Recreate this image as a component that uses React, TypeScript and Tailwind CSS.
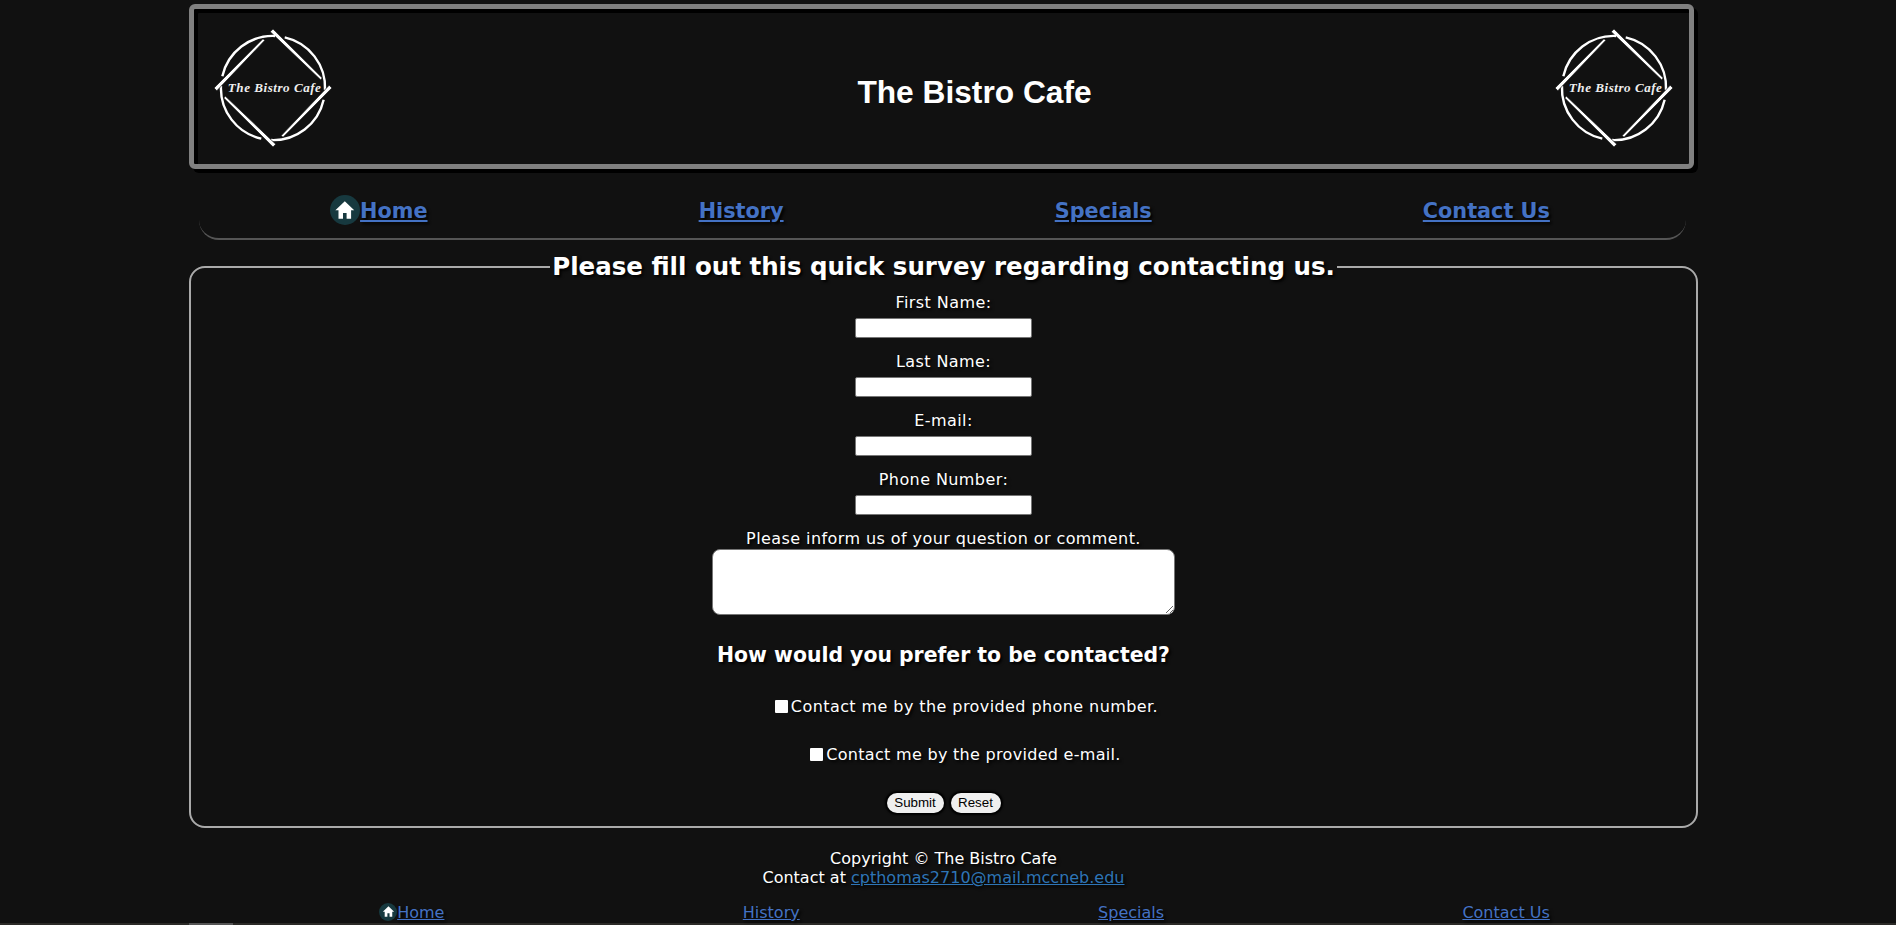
const navLinks = ['History', 'Specials', 'Contact Us'];
const fields = ['First Name:', 'Last Name:', 'E-mail:', 'Phone Number:'];

function HomeIcon({ className }: { className: string }) {
  return (
    <span className={`inline-flex items-center justify-center rounded-full bg-[#17393f] ${className}`}>
      <svg viewBox="0 0 24 24" className="h-[72%] w-[72%]" fill="#ffffff">
        <path d="M12 2.5 1.5 12.5H5V22h5v-6.5h4V22h5v-9.500h3.500z" />
      </svg>
    </span>
  );
}

function Logo() {
  return (
    <svg viewBox="0 0 354 354" className="h-[122px] w-[122px] shrink-0">
      {[0, 90, 180, 270].map((angle) => (
        <g key={angle} transform={`rotate(${angle} 177 177)`}>
          <path d="M211 30A150 150 0 0 1 328 183" fill="none" stroke="#ffffff" strokeWidth="7" />
          <polygon points="169,14 177,6 185,14 320,148 315,153" fill="#ffffff" stroke="#111111" strokeWidth="2" />
        </g>
      ))}
      <text
        x="181"
        y="188"
        textAnchor="middle"
        textLength="270"
        fill="#eeeeee"
        fontSize="38"
        fontStyle="italic"
        fontWeight="700"
        fontFamily="'Liberation Serif', serif"
      >
        The Bistro Cafe
      </text>
    </svg>
  );
}

export default function App() {
  return (
    <div className="h-[925px] overflow-hidden bg-[#111111] font-['DejaVu_Sans',sans-serif] text-white">
      <div className="h-[923px] pr-[9px]">
        <div className="mx-auto flex w-[1509px] flex-col pt-[4px]">
          {/* Header */}
          <header className="flex h-[165px] w-[1505px] shrink-0 items-center justify-between rounded-[6px] border-[5px] border-[#808080] pl-[18px] pr-[14px] pt-[3px] shadow-[4px_4px_0_#000,inset_4px_4px_0_#000]">
            <Logo />
            <h1 className="pl-[62px] pt-[9px] font-['Liberation_Sans',sans-serif] text-[31.7px] font-bold leading-none">
              The Bistro Cafe
            </h1>
            <Logo />
          </header>

          {/* Nav */}
          <nav className="ml-[10px] mt-[4px] h-[67px] w-[1487px] shrink-0 rounded-b-[20px] border-b-2 border-[#555555]">
            <ul className="-ml-[4.500px] flex h-full w-[1491px] items-center justify-around pt-[12px] text-[20.8px] font-bold [text-shadow:2px_2px_3px_#000]">
              <li className="flex items-center">
                <HomeIcon className="-mt-[4px] h-[30px] w-[30px]" />
                <a href="#" className="text-[#4472c4] underline">Home</a>
              </li>
              {navLinks.map((link) => (
                <li key={link}>
                  <a href="#" className="text-[#4472c4] underline">{link}</a>
                </li>
              ))}
            </ul>
          </nav>

          {/* Survey */}
          <form className="mt-[12px] shrink-0">
            <fieldset className="h-[576px] rounded-[16px] border-2 border-[#aaaaaa] text-center [text-shadow:2px_2px_3px_#000]">
              <legend className="mx-auto px-[2px] text-[24.5px] font-bold leading-[30px]">
                Please fill out this quick survey regarding contacting us.
              </legend>
              <div className="flex flex-col items-center pt-[11px] text-base leading-[19px] tracking-[0.42px]">
                {fields.map((field) => (
                  <label key={field} className="flex h-[59px] flex-col items-center">
                    {field}
                    <input
                      type="text"
                      className="mt-[6px] h-[20px] w-[177px] rounded-[2px] border border-[#767676] bg-white"
                    />
                  </label>
                ))}
                <label className="flex flex-col items-center">
                  Please inform us of your question or comment.
                  <textarea className="mt-[1px] h-[66px] w-[463px] rounded-[8px] border border-[#767676] bg-white" />
                </label>
                <h2 className="mt-[25px] text-[20.4px] font-bold leading-[30px] tracking-normal">
                  How would you prefer to be contacted?
                </h2>
                <label className="mt-[27px] flex items-center gap-[3px] pl-[46px]">
                  <input type="checkbox" className="h-[13px] w-[13px] appearance-none rounded-[1px] bg-white" />
                  Contact me by the provided phone number.
                </label>
                <label className="mt-[29px] flex items-center gap-[3px] pl-[44px] tracking-[0.3px]">
                  <input type="checkbox" className="h-[13px] w-[13px] appearance-none rounded-[1px] bg-white" />
                  Contact me by the provided e-mail.
                </label>
                <div className="mt-[29px] flex gap-[7px] font-['Liberation_Sans',sans-serif] text-[13.33px] leading-none tracking-normal text-black [text-shadow:none]">
                  <button type="button" className="h-[20px] w-[57px] rounded-[10px] bg-[#efefef] shadow-[0_0_2px_2px_#000]">Submit</button>
                  <button type="button" className="h-[20px] w-[50px] rounded-[10px] bg-[#efefef] shadow-[0_0_2px_2px_#000]">Reset</button>
                </div>
              </div>
            </fieldset>
          </form>

          {/* Footer */}
          <footer className="mt-[21px] shrink-0 text-base leading-[19px] [text-shadow:2px_2px_3px_#000]">
            <p className="text-center">Copyright © The Bistro Cafe</p>
            <p className="text-center">
              Contact at <a href="#" className="text-[#2e75b6] underline">cpthomas2710@mail.mccneb.edu</a>
            </p>
            <ul className="ml-[41px] mt-[16px] flex w-[1469px] items-center justify-around">
              <li className="flex items-center">
                <HomeIcon className="-mt-[2px] h-[18px] w-[18px]" />
                <a href="#" className="text-[#4472c4] underline">Home</a>
              </li>
              {navLinks.map((link) => (
                <li key={link}>
                  <a href="#" className="text-[#4472c4] underline">{link}</a>
                </li>
              ))}
            </ul>
          </footer>
        </div>
      </div>
      {/* Top edge of the next section, cut off by the window */}
      <div className="h-[2px] bg-[#2b2a27]">
        <div className="ml-[189px] h-full w-[44px] bg-[#555555]" />
      </div>
    </div>
  );
}
